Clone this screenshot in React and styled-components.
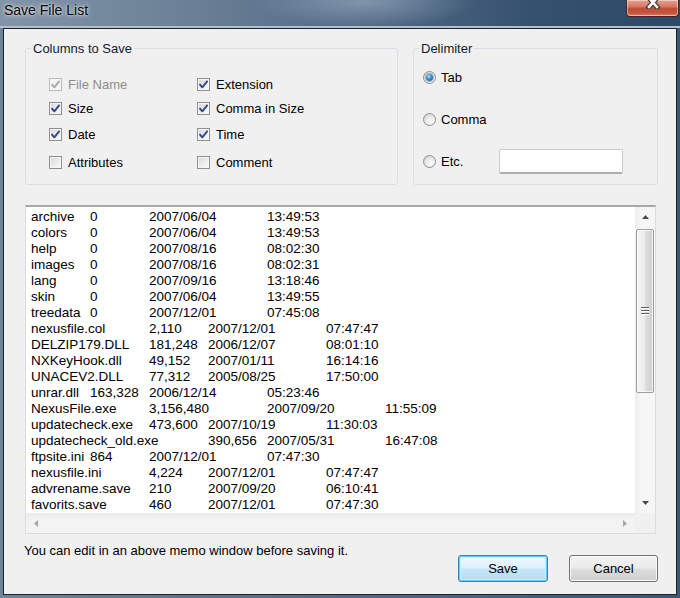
import styled, { createGlobalStyle } from "styled-components";

const GlobalStyle = createGlobalStyle`
  html, body {
    margin: 0;
    padding: 0;
    background: #fff;
  }
  * {
    box-sizing: border-box;
  }
`;

const FONT = `"Liberation Sans", Arial, sans-serif`;

const FILES = [
  ["archive", "0", "2007/06/04", "13:49:53"],
  ["colors", "0", "2007/06/04", "13:49:53"],
  ["help", "0", "2007/08/16", "08:02:30"],
  ["images", "0", "2007/08/16", "08:02:31"],
  ["lang", "0", "2007/09/16", "13:18:46"],
  ["skin", "0", "2007/06/04", "13:49:55"],
  ["treedata", "0", "2007/12/01", "07:45:08"],
  ["nexusfile.col", "2,110", "2007/12/01", "07:47:47"],
  ["DELZIP179.DLL", "181,248", "2006/12/07", "08:01:10"],
  ["NXKeyHook.dll", "49,152", "2007/01/11", "16:14:16"],
  ["UNACEV2.DLL", "77,312", "2005/08/25", "17:50:00"],
  ["unrar.dll", "163,328", "2006/12/14", "05:23:46"],
  ["NexusFile.exe", "3,156,480", "2007/09/20", "11:55:09"],
  ["updatecheck.exe", "473,600", "2007/10/19", "11:30:03"],
  ["updatecheck_old.exe", "390,656", "2007/05/31", "16:47:08"],
  ["ftpsite.ini", "864", "2007/12/01", "07:47:30"],
  ["nexusfile.ini", "4,224", "2007/12/01", "07:47:47"],
  ["advrename.save", "210", "2007/09/20", "06:10:41"],
  ["favorits.save", "460", "2007/12/01", "07:47:30"],
];

const COLUMNS = [
  { label: "File Name", checked: true, disabled: true },
  { label: "Extension", checked: true },
  { label: "Size", checked: true },
  { label: "Comma in Size", checked: true },
  { label: "Date", checked: true },
  { label: "Time", checked: true },
  { label: "Attributes", checked: false },
  { label: "Comment", checked: false },
];

const Window = styled.div`
  width: 680px;
  height: 598px;
  display: flex;
  flex-direction: column;
  overflow: hidden;
  font-family: ${FONT};
  background: linear-gradient(to right, #6f8399 0%, #566d86 45%, #3d5874 100%);
`;

const TitleBar = styled.div`
  height: 28px;
  flex: none;
  display: flex;
  align-items: flex-start;
  padding: 0 1px 0 4px;
  border-bottom: 2px solid #b3bec9;
  background:
    radial-gradient(ellipse 110px 26px at 365px 2px, rgba(160, 178, 198, 0.6), transparent),
    linear-gradient(to right, #8294a7 0%, #6b8096 28%, #536b86 52%, #36516f 78%, #2e4967 100%);
`;

const Title = styled.span`
  margin-top: 2px;
  font-size: 14px;
  line-height: 16px;
  color: #000;
  text-shadow: 0 0 5px rgba(255, 255, 255, 0.9), 0 0 2px rgba(255, 255, 255, 0.8);
`;

const CloseButton = styled.div`
  margin-left: auto;
  width: 53px;
  height: 17px;
  display: flex;
  justify-content: center;
  border: 1px solid #4f2017;
  border-top: none;
  border-radius: 0 0 4px 4px;
  background: linear-gradient(#e6a08f 0%, #d67a66 40%, #c04a33 55%, #c65a43 85%, #d98672 100%);
  box-shadow: inset 0 0 0 1px rgba(255, 255, 255, 0.45);
  overflow: hidden;
`;

const Client = styled.div`
  flex: 1;
  margin: 0 3px 3px;
  border: 1px solid #1a2431;
  background: #f0f0f0;
  padding: 12px 18px 0 21px;
  display: flex;
  flex-direction: column;
  color: #000;
`;

const OptionsRow = styled.div`
  display: flex;
  gap: 15px;
`;

const Group = styled.fieldset`
  margin: 0;
  padding: 0;
  min-width: 0;
  height: 144px;
  flex: ${(p) => (p.$width ? "none" : "1")};
  width: ${(p) => (p.$width ? `${p.$width}px` : "auto")};
  border: 1px solid #d5dfe5;
  border-radius: 3px;
`;

const Legend = styled.legend`
  margin-left: 5px;
  padding: 0 2px;
  font-size: 13px;
  line-height: 15px;
  color: #141b2e;
`;

const CheckGrid = styled.div`
  display: grid;
  grid-template-columns: 148px auto;
  grid-template-rows: 24px 26px 28px 16px;
  padding: 20px 0 0 23px;
`;

const OptionItem = styled.label`
  display: flex;
  align-items: center;
  gap: ${(p) => p.$gap}px;
  height: ${(p) => p.$height}px;
  font-size: 13px;
  color: ${(p) => (p.$disabled ? "#8d8d8d" : "#000")};
`;

const CheckBox = styled.span`
  width: 13px;
  height: 13px;
  flex: none;
  display: flex;
  align-items: center;
  justify-content: center;
  border: 1px solid ${(p) => (p.$disabled ? "#bababa" : "#8e8f8f")};
  background: ${(p) =>
    p.$disabled
      ? "#f4f4f4"
      : "linear-gradient(135deg, #d6d6d6 0%, #ececec 55%, #fbfbfb 100%)"};
  box-shadow: inset 0 0 0 1px #f6f6f6;
`;

const RadioList = styled.div`
  display: flex;
  flex-direction: column;
  gap: 18px;
  padding: 9px 0 0 9px;
`;

const Radio = styled.span`
  width: 13px;
  height: 13px;
  flex: none;
  border-radius: 50%;
  display: flex;
  align-items: center;
  justify-content: center;
  border: 1px solid #8e8f8f;
  background: radial-gradient(circle at 65% 70%, #fdfdfd 0%, #e6e6e6 55%, #c9c9c9 100%);
`;

const RadioDot = styled.span`
  width: 7px;
  height: 7px;
  border-radius: 50%;
  background: radial-gradient(circle at 40% 35%, #bfe6ff 0%, #3a8fd8 40%, #104f95 100%);
  box-shadow: 0 0 0 1px rgba(30, 80, 140, 0.35);
`;

const EtcInput = styled.input`
  margin: 0 34px 0 auto;
  width: 124px;
  height: 25px;
  padding: 0 3px;
  background: #fff;
  border: 1px solid #cdcdcd;
  border-bottom: 2px solid #adadad;
  border-radius: 2px;
  font: 13px ${FONT};
  outline: none;
`;

const Memo = styled.div`
  margin: 20px 2px 0 0;
  height: 329px;
  display: grid;
  grid-template-columns: 1fr 20px;
  grid-template-rows: 1fr 20px;
  background: #fff;
  border: 1px solid #dcdcdc;
  border-top: 2px solid #a9a9a9;
`;

const MemoText = styled.pre`
  margin: 0;
  padding: 2px 0 0 5px;
  overflow: hidden;
  white-space: pre;
  font-family: ${FONT};
  font-size: 13.5px;
  line-height: 16px;
  tab-size: 59px;
  -moz-tab-size: 59px;
  color: #000;
`;

const VScroll = styled.div`
  display: flex;
  flex-direction: column;
  padding: 0 1px;
  background: linear-gradient(to right, #ececec 0%, #f6f6f6 30%, #f6f6f6 100%);
`;

const HScroll = styled.div`
  display: flex;
  justify-content: space-between;
  background: linear-gradient(#ececec 0%, #f3f3f3 35%, #f3f3f3 100%);
`;

const ScrollButton = styled.div`
  flex: none;
  width: ${(p) => (p.$horizontal ? "20px" : "auto")};
  height: ${(p) => (p.$horizontal ? "auto" : "20px")};
  display: flex;
  align-items: center;
  justify-content: center;
  color: ${(p) => (p.$disabled ? "#a6a6a6" : "#4a4a4a")};
`;

const Thumb = styled.div`
  margin-top: 2px;
  height: 164px;
  display: flex;
  align-items: center;
  justify-content: center;
  border: 1px solid #9d9d9d;
  border-radius: 2px;
  background: linear-gradient(to right, #f5f5f5 0%, #ececec 45%, #dcdcdc 55%, #cfcfcf 100%);
  box-shadow: inset 0 0 0 1px rgba(255, 255, 255, 0.75);
`;

const Spacer = styled.div`
  flex: 1;
`;

const Corner = styled.div`
  background: #f0f0f0;
`;

const Footer = styled.div`
  display: flex;
  align-items: flex-start;
`;

const Hint = styled.p`
  margin: 9px 0 0 -1px;
  font-size: 13px;
  line-height: 15px;
`;

const ButtonRow = styled.div`
  margin: 21px 0 0 auto;
  display: flex;
  gap: 21px;
`;

const DialogButton = styled.button`
  width: ${(p) => p.$width}px;
  height: 27px;
  padding: 0;
  font: 13px ${FONT};
  color: #000;
  border-radius: 3px;
  border: 1px solid ${(p) => (p.$default ? "#3c7fb1" : "#707070")};
  background: ${(p) =>
    p.$default
      ? "linear-gradient(#edf7fd 0%, #def1fb 48%, #c6e6f7 52%, #b3dcf2 100%)"
      : "linear-gradient(#f2f2f2 0%, #ebebeb 48%, #dddddd 52%, #cfcfcf 100%)"};
  box-shadow: ${(p) =>
    p.$default
      ? "inset 0 0 0 1px #5fcff7, inset 0 0 0 2px #c9effc"
      : "inset 0 0 0 1px #fbfbfb"};
`;

function Arrow({ dir }) {
  const points = {
    up: "0,4 3.5,0 7,4",
    down: "0,0 7,0 3.5,4",
    left: "4,0 4,7 0,3.5",
    right: "0,0 4,3.5 0,7",
  }[dir];
  const vertical = dir === "up" || dir === "down";
  return (
    <svg width={vertical ? 7 : 4} height={vertical ? 4 : 7} viewBox={vertical ? "0 0 7 4" : "0 0 4 7"}>
      <polygon points={points} fill="currentColor" />
    </svg>
  );
}

function Check({ disabled }) {
  return (
    <svg width="11" height="11" viewBox="0 0 11 11">
      <path
        d="M2 5.6 L4.3 8.3 L9.1 2.4"
        fill="none"
        stroke={disabled ? "#a9a9a9" : "#33488a"}
        strokeWidth="1.9"
        strokeLinecap="round"
        strokeLinejoin="round"
      />
    </svg>
  );
}

function Grip() {
  return (
    <svg width="8" height="8" viewBox="0 0 8 8">
      {[0, 3, 6].map((y) => (
        <g key={y}>
          <rect x="0" y={y} width="8" height="1" fill="#5e5e5e" />
          <rect x="0" y={y + 1} width="8" height="1" fill="#ffffff" />
        </g>
      ))}
    </svg>
  );
}

function CloseGlyph() {
  return (
    <svg width="16" height="13" viewBox="0 0 16 13" style={{ marginTop: -4 }}>
      <path d="M4 2 L12 11 M12 2 L4 11" stroke="#3b3b3b" strokeWidth="5" strokeLinecap="square" />
      <path d="M4 2 L12 11 M12 2 L4 11" stroke="#ffffff" strokeWidth="2.6" strokeLinecap="square" />
    </svg>
  );
}

function App() {
  const text = FILES.map((row) => row.join("\t")).join("\n");
  return (
    <>
      <GlobalStyle />
      <Window>
        <TitleBar>
          <Title>Save File List</Title>
          <CloseButton>
            <CloseGlyph />
          </CloseButton>
        </TitleBar>
        <Client>
          <OptionsRow>
            <Group $width={373}>
              <Legend>Columns to Save</Legend>
              <CheckGrid>
                {COLUMNS.map((c) => (
                  <OptionItem key={c.label} $gap={6} $height={16} $disabled={c.disabled}>
                    <CheckBox $disabled={c.disabled}>
                      {c.checked && <Check disabled={c.disabled} />}
                    </CheckBox>
                    {c.label}
                  </OptionItem>
                ))}
              </CheckGrid>
            </Group>
            <Group>
              <Legend>Delimiter</Legend>
              <RadioList>
                <OptionItem $gap={5} $height={24}>
                  <Radio>
                    <RadioDot />
                  </Radio>
                  Tab
                </OptionItem>
                <OptionItem $gap={5} $height={24}>
                  <Radio />
                  Comma
                </OptionItem>
                <OptionItem $gap={5} $height={24}>
                  <Radio />
                  Etc.
                  <EtcInput defaultValue="" />
                </OptionItem>
              </RadioList>
            </Group>
          </OptionsRow>

          <Memo>
            <MemoText>{text}</MemoText>
            <VScroll>
              <ScrollButton>
                <Arrow dir="up" />
              </ScrollButton>
              <Thumb>
                <Grip />
              </Thumb>
              <Spacer />
              <ScrollButton>
                <Arrow dir="down" />
              </ScrollButton>
            </VScroll>
            <HScroll>
              <ScrollButton $horizontal $disabled>
                <Arrow dir="left" />
              </ScrollButton>
              <ScrollButton $horizontal $disabled>
                <Arrow dir="right" />
              </ScrollButton>
            </HScroll>
            <Corner />
          </Memo>

          <Footer>
            <Hint>You can edit in an above memo window before saving it.</Hint>
            <ButtonRow>
              <DialogButton $width={90} $default>
                Save
              </DialogButton>
              <DialogButton $width={89}>Cancel</DialogButton>
            </ButtonRow>
          </Footer>
        </Client>
      </Window>
    </>
  );
}

export default App;
